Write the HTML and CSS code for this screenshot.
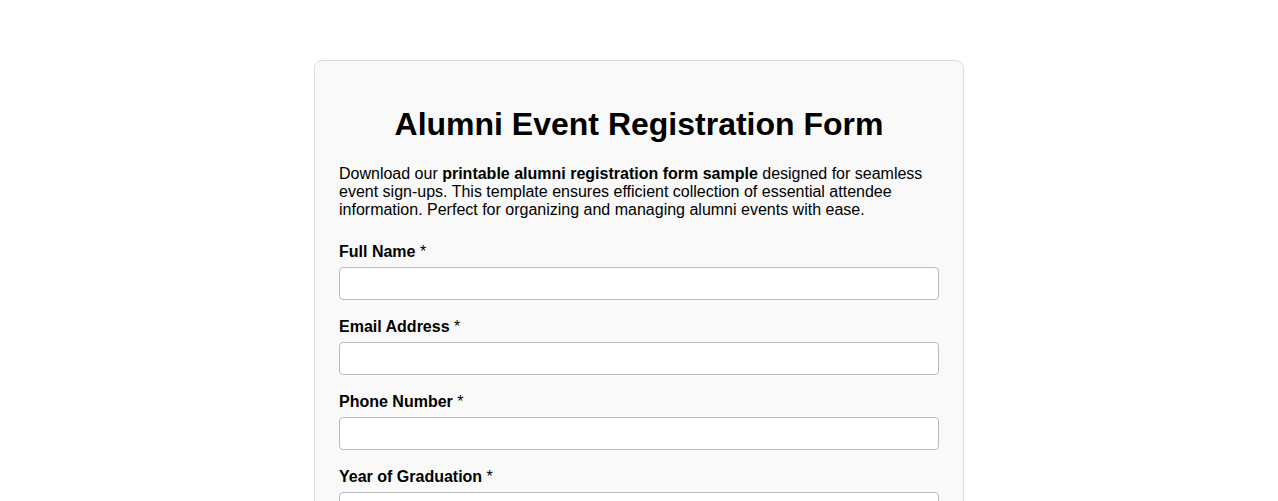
FILE: index.html
```html
<!DOCTYPE html>
<html lang="en">
<head>
<meta charset="utf-8">
<title>Alumni Event Registration Form</title>
<link rel="stylesheet" href="styles.css">
</head>
<body>
<div class="card">
  <h1 class="title">Alumni Event Registration Form</h1>
  <p class="intro">Download our <strong>printable alumni registration form sample</strong> designed for seamless event sign-ups. This template ensures efficient collection of essential attendee information. Perfect for organizing and managing alumni events with ease.</p>
  <form class="form">
    <div class="group">
      <label class="label" for="name">Full Name <span class="req">*</span></label>
      <input class="input" id="name" type="text">
    </div>
    <div class="group">
      <label class="label" for="email">Email Address <span class="req">*</span></label>
      <input class="input" id="email" type="email">
    </div>
    <div class="group">
      <label class="label" for="phone">Phone Number <span class="req">*</span></label>
      <input class="input" id="phone" type="tel">
    </div>
    <div class="group">
      <label class="label" for="year">Year of Graduation <span class="req">*</span></label>
      <input class="input" id="year" type="text">
    </div>
    <div class="group">
      <label class="label" for="degree">Degree / Program</label>
      <input class="input" id="degree" type="text">
    </div>
  </form>
</div>
</body>
</html>
```

FILE: styles.css
```css
html, body {
  margin: 0;
  padding: 0;
  background: #ffffff;
}
body {
  font-family: "Liberation Sans", Arial, sans-serif;
  color: #000;
  font-size: 16px;
}
.card {
  width: 600px;
  margin: 60px auto;
  padding: 24px;
  background: #f9f9f9;
  border: 1px solid #dddddd;
  border-radius: 8px;
}
.title {
  font-size: 32px;
  font-weight: bold;
  text-align: center;
  margin: 21px 0 22px;
}
.intro {
  margin: 0 0 24px;
  line-height: normal;
}
.form {
  margin: 0;
}
.group {
  margin-bottom: 17.9px;
}
.label {
  display: block;
  font-weight: bold;
  margin-bottom: 6px;
}
.req {
  font-weight: normal;
}
.input {
  display: block;
  width: 100%;
  box-sizing: border-box;
  padding: 8px;
  border: 1px solid #bbbbbb;
  border-radius: 4px;
  background: #ffffff;
  font-family: "Liberation Sans", Arial, sans-serif;
  font-size: 13.33px;
  margin: 0;
}
```
